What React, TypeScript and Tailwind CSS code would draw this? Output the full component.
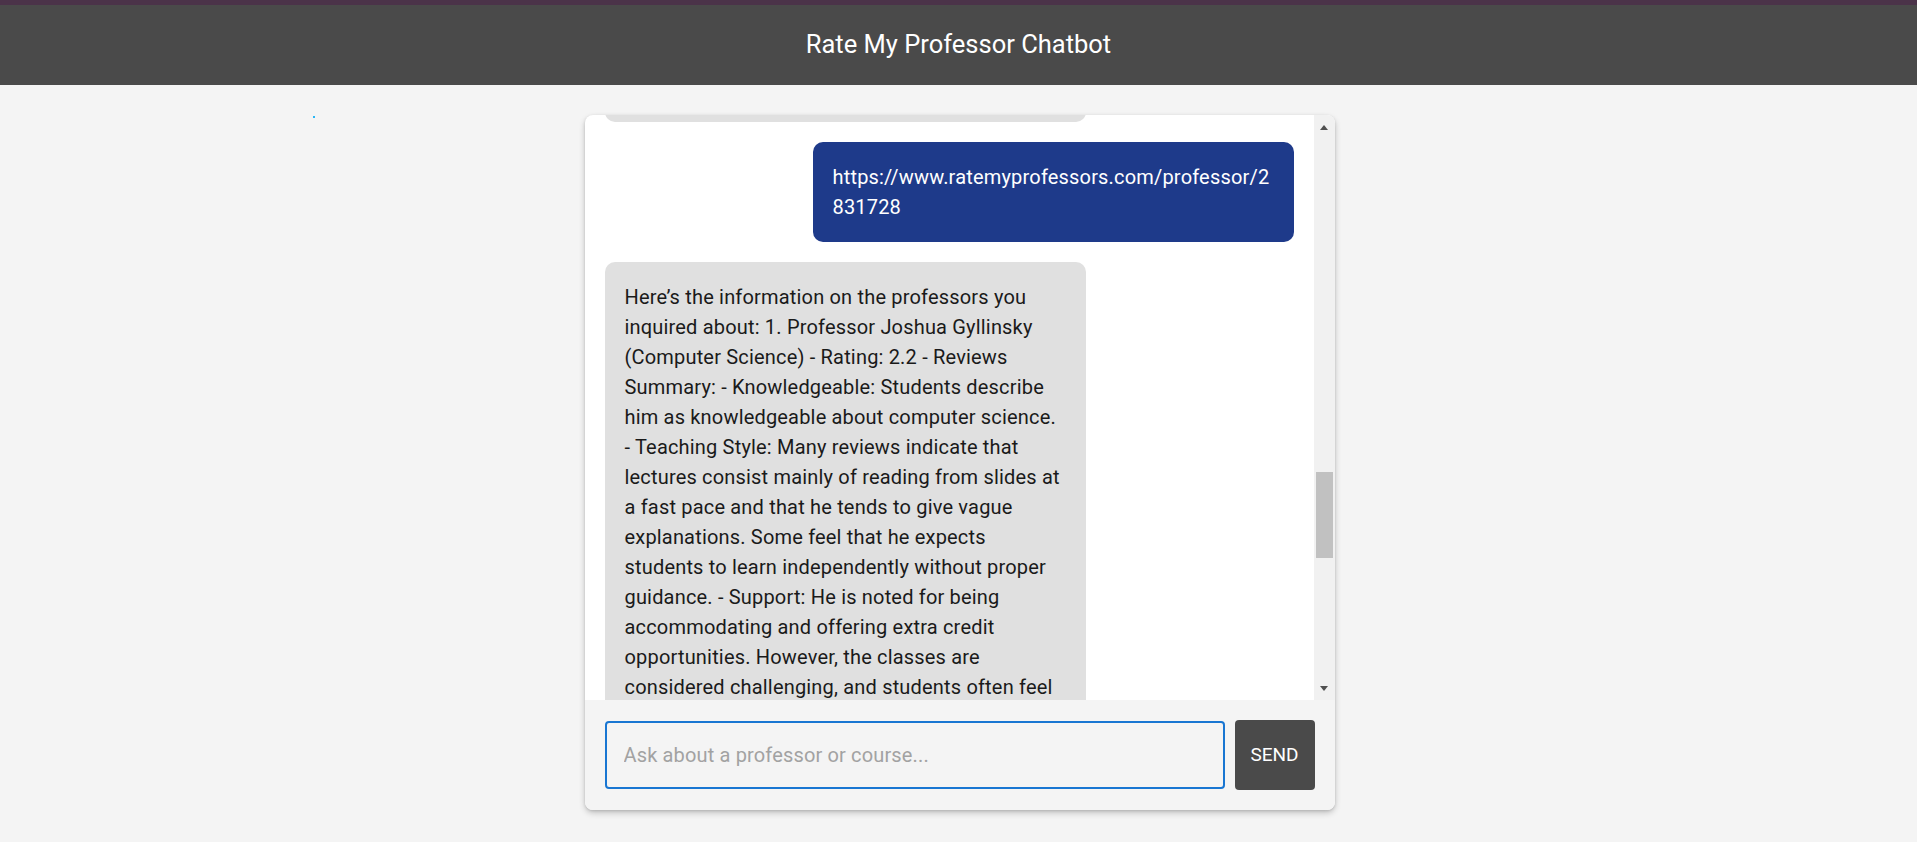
import { useState } from "react";

const messages = [
  {
    role: "assistant",
    content:
      "Hi! I'm the Rate My Professor support assistant. How can I help you today?",
  },
  {
    role: "user",
    content: "https://www.ratemyprofessors.com/professor/2831728",
  },
  {
    role: "assistant",
    content:
      "Here’s the information on the professors you inquired about: 1. Professor Joshua Gyllinsky (Computer Science) - Rating: 2.2 - Reviews Summary: - Knowledgeable: Students describe him as knowledgeable about computer science. - Teaching Style: Many reviews indicate that lectures consist mainly of reading from slides at a fast pace and that he tends to give vague explanations. Some feel that he expects students to learn independently without proper guidance. - Support: He is noted for being accommodating and offering extra credit opportunities. However, the classes are considered challenging, and students often feel overwhelmed by the workload and the pace of the material.",
  },
];

function Scrollbar() {
  return (
    <div className="flex w-[21px] shrink-0 flex-col items-center bg-[#f1f1f1]">
      <div className="flex h-[24px] items-center justify-center">
        <svg width="8" height="5" viewBox="0 0 8 5">
          <path d="M0 5 L4 0 L8 5 Z" fill="#505050" />
        </svg>
      </div>
      <div className="mt-[333px] h-[86px] w-[17px] bg-[#c1c1c1]" />
      <div className="flex-1" />
      <div className="flex h-[24px] items-center justify-center">
        <svg width="8" height="5" viewBox="0 0 8 5">
          <path d="M0 0 L8 0 L4 5 Z" fill="#505050" />
        </svg>
      </div>
    </div>
  );
}

export default function App() {
  const [input, setInput] = useState("");

  return (
    <div className="min-h-screen bg-[#f4f4f4] font-['Roboto',sans-serif]">
      <div className="h-[5px] bg-[#4b3349]" />
      <header className="flex h-20 items-center justify-center bg-[#4a4a4a]">
        <h1 className="text-[25.5px] leading-none text-white">
          Rate My Professor Chatbot
        </h1>
      </header>

      <main className="relative pt-[30px] pb-8">
        <span className="absolute left-[313px] top-[31px] h-[2px] w-[2px] bg-[#29b6f6]" />
        <div className="mx-auto flex h-[695px] w-[750px] translate-x-[1px] flex-col overflow-hidden rounded-lg bg-white shadow-[0_3px_6px_rgba(0,0,0,0.2),0_1px_3px_rgba(0,0,0,0.12)]">
          <div className="flex min-h-0 flex-1">
            <div className="min-w-0 flex-1 overflow-hidden px-5">
              <div className="-mt-[93px] flex flex-col gap-5">
                {messages.map((m, i) => (
                  <div
                    key={i}
                    className={`flex ${m.role === "user" ? "justify-end" : "justify-start"}`}
                  >
                    <div
                      className={`max-w-[481px] rounded-[10px] p-5 text-xl leading-[30px] tracking-[0.18px] ${
                        m.role === "user"
                          ? "bg-[#1e3a8a] text-white break-all"
                          : "bg-[#e0e0e0] text-[#1a1a1a] break-words"
                      }`}
                    >
                      {m.content}
                    </div>
                  </div>
                ))}
              </div>
            </div>
            <Scrollbar />
          </div>

          <div className="flex items-center gap-[10px] bg-[#f4f4f4] p-5">
            <input
              autoFocus
              value={input}
              onChange={(e) => setInput(e.target.value)}
              placeholder="Ask about a professor or course..."
              className="h-[68px] flex-1 rounded border-2 border-[#1976d2] bg-[#f4f4f4] px-[17px] text-xl tracking-[0.15px] text-[#1a1a1a] outline-none placeholder:text-[#a2a2a2]"
            />
            <button className="h-[70px] w-20 rounded bg-[#4a4a4a] text-[19px] text-white uppercase">
              Send
            </button>
          </div>
        </div>
      </main>
    </div>
  );
}
